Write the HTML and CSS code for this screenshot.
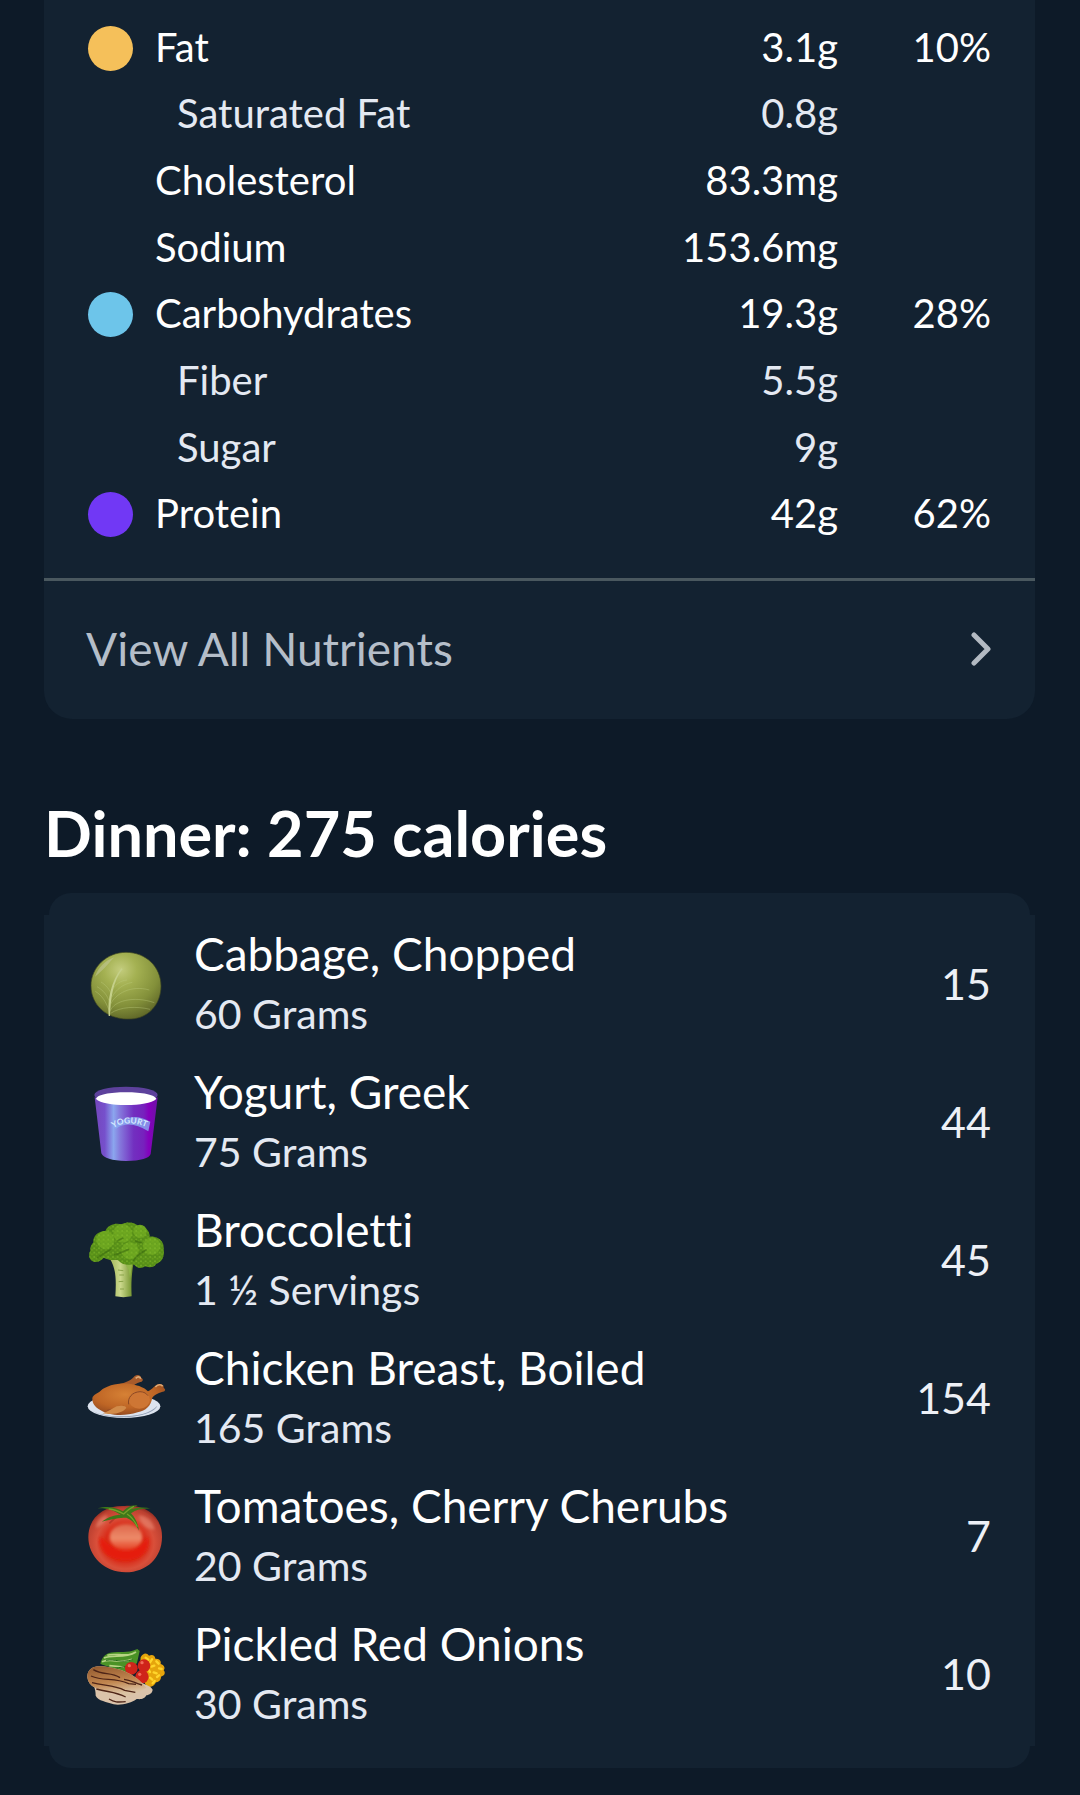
FILE: index.html
```html
<!DOCTYPE html>
<html lang="en">
<head>
<meta charset="utf-8">
<meta name="viewport" content="width=device-width, initial-scale=1">
<title>Dinner</title>
<link rel="stylesheet" href="styles.css">
</head>
<body>
<main class="page">
  <section class="nutrients">
    <table class="nutrient-table">
      <tbody>
        <tr><td class="dot-cell"><span class="dot dot-fat"></span></td><th scope="row">Fat</th><td class="amount">3.1g</td><td class="percent">10%</td></tr>
        <tr class="sub"><td></td><th scope="row">Saturated Fat</th><td class="amount">0.8g</td><td></td></tr>
        <tr><td></td><th scope="row">Cholesterol</th><td class="amount">83.3mg</td><td></td></tr>
        <tr><td></td><th scope="row">Sodium</th><td class="amount">153.6mg</td><td></td></tr>
        <tr><td class="dot-cell"><span class="dot dot-carbs"></span></td><th scope="row">Carbohydrates</th><td class="amount">19.3g</td><td class="percent">28%</td></tr>
        <tr class="sub"><td></td><th scope="row">Fiber</th><td class="amount">5.5g</td><td></td></tr>
        <tr class="sub"><td></td><th scope="row">Sugar</th><td class="amount">9g</td><td></td></tr>
        <tr><td class="dot-cell"><span class="dot dot-protein"></span></td><th scope="row">Protein</th><td class="amount">42g</td><td class="percent">62%</td></tr>
      </tbody>
    </table>
    <a class="view-all" href="#nutrients">
      <span>View All Nutrients</span>
      <svg class="chevron" viewBox="0 0 22 36" aria-hidden="true"><path d="M3 4 17 18 3 32"/></svg>
    </a>
  </section>

  <h1 class="meal-title">Dinner: 275 calories</h1>

  <section class="meal">
    <ul class="foods">
      <li class="food">
        <svg class="food-icon" viewBox="54 48 228 228" aria-hidden="true">
          <defs>
            <radialGradient id="cabbage" cx=".42" cy=".26" r=".78"><stop offset="0" stop-color="#c3cc7d"/><stop offset=".3" stop-color="#a4b152"/><stop offset=".7" stop-color="#83903a"/><stop offset="1" stop-color="#5d6527"/></radialGradient>
          </defs>
          <path d="M168 67c60 0 105 44 105 101 0 55-38 97-90 99-70 4-120-40-120-100 0-55 47-100 105-100Z" fill="url(#cabbage)" stroke="#3c4520" stroke-width="2"/>
          <path d="M75 140c12-30 30-48 58-58-18 18-34 40-58 58Z" fill="#c2c99a" opacity=".55"/>
          <path d="M120 258c2-50 8-105 38-141l-4-2c-30 38-42 92-38 143Z" fill="#c5d08a"/>
          <g fill="none" stroke="#bcc97c" stroke-width="2" opacity=".6"><path d="M121 242c10-28 68-46 132-24M122 250c28-20 78-22 118-12M122 222c14-30 60-58 116-42M125 202c14-24 34-40 62-45M129 176c10-14 22-24 42-26M116 238c-8-22-20-42-40-54M119 218c-6-22-20-38-38-48M123 190c-8-18-18-26-30-34"/></g>
        </svg>
        <div class="food-text"><span class="food-name">Cabbage, Chopped</span><span class="serving">60 Grams</span></div>
        <span class="calories">15</span>
      </li>
      <li class="food">
        <svg class="food-icon" viewBox="54 42 228 228" aria-hidden="true">
          <defs>
            <linearGradient id="cup"><stop offset="0" stop-color="#7446bd"/><stop offset=".16" stop-color="#7650cc"/><stop offset=".3" stop-color="#8ba6ee"/><stop offset=".4" stop-color="#8579dc"/><stop offset=".62" stop-color="#722fc0"/><stop offset=".78" stop-color="#7621bd"/><stop offset=".86" stop-color="#8500bd"/><stop offset="1" stop-color="#6c12a4"/></linearGradient>
            <path id="yogurt-arc" d="M130 174Q176 146 235 174"/>
          </defs>
          <path d="M74 82Q168 118 263 82L242 252Q235 272 168 273 104 272 94 250Z" fill="url(#cup)"/>
          <ellipse cx="168" cy="75" rx="95" ry="25" fill="#5d419c"/>
          <path d="M78 87c2-13 42-20 90-20s87 7 91 20c-14 12-49 18-91 18s-77-6-90-18Z" fill="#fff"/>
          <path d="M130 171Q180 120 241 155L235 184Q178 148 138 176Z" fill="#8aabf2" opacity=".8"/>
          <text class="cup-label"><textPath href="#yogurt-arc">YOGURT</textPath></text>
        </svg>
        <div class="food-text"><span class="food-name">Yogurt, Greek</span><span class="serving">75 Grams</span></div>
        <span class="calories">44</span>
      </li>
      <li class="food">
        <svg class="food-icon" viewBox="54 54 228 228" aria-hidden="true">
          <defs>
            <linearGradient id="stalk"><stop offset="0" stop-color="#a4b85b"/><stop offset=".45" stop-color="#cbd88c"/><stop offset="1" stop-color="#6b8d25"/></linearGradient>
            <pattern id="florets" width="14" height="13" patternUnits="userSpaceOnUse"><circle cx="3" cy="3" r="3" fill="#85bd2c"/><circle cx="10" cy="8" r="3" fill="#76ab20"/><circle cx="8" cy="1" r="1" fill="#3d7410"/><circle cx="3" cy="10" r="1" fill="#447c12"/></pattern>
            <path id="crown" d="M76 174c-20-3-22-22-15-34-1-14 6-20 9-25-1-20 14-33 36-34 8-18 30-25 48-20 20-10 40-6 50 4 20 0 36 14 35 33 26-2 44 14 42 36 4 24-6 40-22 45-5 12-24 12-34 8-12 8-22 6-32-4-10-4-18 2-28-2-15-3-18-14-26-14-18 4-28-2-38-6-6 8-14 12-25 13Z"/>
          </defs>
          <path d="M120 165c18 28 19 62 16 112q24 5 49 0c-2-38 0-66 5-96l-32-12Z" fill="url(#stalk)"/>
          <path d="M168 185l20-14-8 52-4-26Z" fill="#91b64a"/>
          <path d="M144 198l16 2M148 213h14M146 233l14-1M150 255h12" stroke="#8ba44a" stroke-width="3"/>
          <use href="#crown" fill="#578f18"/>
          <g fill="#6ba51f"><circle cx="158" cy="88" r="28"/><circle cx="106" cy="108" r="27"/><circle cx="245" cy="126" r="26"/><circle cx="180" cy="140" r="26"/><circle cx="210" cy="82" r="20"/></g>
          <use href="#crown" fill="url(#florets)" opacity=".6"/>
          <path d="M82 162c16-12 26-18 42-26M132 152c22-2 30-14 46-16M190 171c10-20 24-24 40-34M195 110l20 7M142 110l18-8" fill="none" stroke="#315f0b" stroke-width="5" opacity=".5"/>
        </svg>
        <div class="food-text"><span class="food-name">Broccoletti</span><span class="serving">1 ½ Servings</span></div>
        <span class="calories">45</span>
      </li>
      <li class="food">
        <svg class="food-icon" viewBox="54 48 228 228" aria-hidden="true">
          <defs>
            <radialGradient id="roast" cx=".45" cy=".35" r=".7"><stop offset="0" stop-color="#d68135"/><stop offset=".6" stop-color="#be6525"/><stop offset="1" stop-color="#8d461e"/></radialGradient>
          </defs>
          <ellipse cx="162" cy="187" rx="109" ry="35" fill="#dce3ee"/>
          <path d="M63 197c30 26 164 31 199-12-20 42-160 45-199 12Z" fill="#8d9bb0"/>
          <path d="M144 121c28-5 42-15 50-25 10-7 19-1 20 6 8 4 4 12-3 12-12 4-20 9-27 17Z" fill="#a85b2b"/>
          <path d="M67 162c3-12 17-13 25-22 20-20 72-27 101-18 22 5 34 12 41 20 13-5 21-20 32-22 10-1 17 5 15 12 8 4 4 12-3 11-16 4-27 11-31 18-5 26-19 38-44 44-42 14-89 9-111-6-18-10-26-22-25-37Z" fill="url(#roast)"/>
          <ellipse cx="208" cy="167" rx="32" ry="27" fill="#ce7634"/>
          <path d="M176 181c-4-19 10-37 34-38 12 0 20 6 24 12M112 199c18-2 26-10 49-12" fill="none" stroke="#8b4823" stroke-width="3"/>
          <path d="M98 208c15-4 26-14 42-21 15-3 28-2 29 5-9 11-29 22-71 16Z" fill="#d18b49"/>
          <path d="M197 103c6-6 13-6 15 1M256 129c8-9 18-8 22-2" fill="none" stroke="#dfaa75" stroke-width="5"/>
        </svg>
        <div class="food-text"><span class="food-name">Chicken Breast, Boiled</span><span class="serving">165 Grams</span></div>
        <span class="calories">154</span>
      </li>
      <li class="food">
        <svg class="food-icon" viewBox="54 60 228 228" aria-hidden="true">
          <defs>
            <radialGradient id="tomato" cx=".5" cy=".56" r=".6"><stop offset="0" stop-color="#e32810"/><stop offset=".45" stop-color="#d92b18"/><stop offset=".65" stop-color="#d94f3a"/><stop offset=".88" stop-color="#bb4030"/><stop offset="1" stop-color="#79231b"/></radialGradient>
            <linearGradient id="shine" x2="0" y2="1"><stop offset="0" stop-color="#dd6549"/><stop offset=".55" stop-color="#ed8a69"/><stop offset="1" stop-color="#e53c20"/></linearGradient>
            <filter id="soft"><feGaussianBlur stdDeviation="4"/></filter>
          </defs>
          <path d="M165 84c65-5 112 33 111 93 0 62-46 106-109 106S55 235 55 178c0-61 48-97 110-94Z" fill="url(#tomato)"/>
          <path d="M90 178c20 8 26 36 78 38 48-2 50-26 66-38 8 39-19 69-67 69-47 0-83-25-77-69Z" fill="#e51d08" filter="url(#soft)"/>
          <ellipse cx="168" cy="177" rx="49" ry="39" fill="url(#shine)" filter="url(#soft)"/>
          <path d="M205 112c28 2 44 18 49 43-20 0-42-14-49-43ZM78 150c0-22 14-33 32-40 8 12-10 32-32 40Z" fill="#ec927a" opacity=".55" filter="url(#soft)"/>
          <path d="M148 111c-10 6-20 14-30 25" stroke="#a82c20" stroke-width="5" opacity=".6"/>
          <path d="M83 91c30-8 54-3 76 9 10-10 23-20 44-18-8 4-14 8-20 12 22-6 42-7 60-2-26-1-44 3-60 14 12 12 20 28 24 52-10-20-20-32-38-39-22 0-42 4-74 12 22-15 38-20 57-20-18-13-38-21-69-20Z" fill="#3d7819"/>
          <path d="M116 93c20 2 30 7 45 15 9-9 18-17 31-23M171 108c17 10 24 23 31 38" fill="none" stroke="#75a02a" stroke-width="4"/>
        </svg>
        <div class="food-text"><span class="food-name">Tomatoes, Cherry Cherubs</span><span class="serving">20 Grams</span></div>
        <span class="calories">7</span>
      </li>
      <li class="food">
        <svg class="food-icon" viewBox="54 54 228 228" aria-hidden="true">
          <defs><linearGradient id="grilled" x2=".3" y2="1"><stop offset="0" stop-color="#92582d"/><stop offset=".6" stop-color="#c1864f"/><stop offset="1" stop-color="#dbc3a4"/></linearGradient></defs>
          <path d="M212 118c8-14 18-14 25-5 12-5 18 2 19 9 14-1 18 8 16 16 12 4 14 13 9 19 8 9 0 18-8 19 0 12-9 16-15 17-6 14-18 16-28 12-10-15-24-44-18-87Z" fill="#e6a50c"/>
          <path d="M227 119l8 6M246 124l-6 9M259 130l7 7M244 146l9-3M267 151l8 2M251 163l9 3M267 172l-6 5M240 179l7 6M254 189l-6 7M235 155l5 7" stroke="#ffd52b" stroke-width="7" stroke-linecap="round"/>
          <path d="M91 137c6-22 18-34 42-34 20-4 40 4 69-10l7 6-8 36-30 30-34-10c-16-10-30-10-46-18Z" fill="#4a9226"/>
          <path d="M102 120c28-12 60 4 96-18M96 131c32-12 60 8 90-7M112 112c22-8 52 5 76-5M118 143l44 4" fill="none" stroke="#b7d484" stroke-width="5"/>
          <path d="M108 127c28-6 42 10 80-2M134 151c18-2 24-6 40-5" fill="none" stroke="#226b18" stroke-width="3"/>
          <g fill="#cf241a"><circle cx="184" cy="151" r="19"/><circle cx="222" cy="143" r="19"/><circle cx="216" cy="176" r="20"/></g>
          <g fill="#f16a57"><circle cx="178" cy="143" r="5"/><circle cx="216" cy="134" r="5"/><circle cx="209" cy="169" r="5"/></g>
          <path d="M52 178c-1-20 13-31 30-33 50-1 108 20 131 48 13 8 28 10 35 22-1 12-12 15-19 17-6 13-19 12-29 11-15 12-47 20-69 16-20-8-47-10-54-26 0-12-2-18-4-25-14-7-19-18-21-30Z" fill="#dbc3aa"/>
          <path d="M52 178c-1-20 13-31 30-33 50-1 108 20 131 48l16 16c-18 12-36 22-65 25-28-8-60-10-91-26-14-7-19-18-21-30Z" fill="url(#grilled)"/>
          <path d="M70 155c30 18 52 6 80 24M63 174c40 18 66 2 113 23l22 2M66 194c38 10 65 7 98 23l32 6M79 213c36 10 58 8 88 24M117 243c20 12 30 9 50 8M162 184c22 2 32 12 54 17" fill="none" stroke="#4e2417" stroke-width="4"/>
        </svg>
        <div class="food-text"><span class="food-name">Pickled Red Onions</span><span class="serving">30 Grams</span></div>
        <span class="calories">10</span>
      </li>
    </ul>
  </section>
</main>
</body>
</html>
```
FILE: styles.css
```css
* {
  box-sizing: border-box;
}

body {
  margin: 0;
  background: #0d1a28;
  color: #fff;
  font-family: Lato, "Liberation Sans", sans-serif;
  font-variant-ligatures: none;
}

.page {
  padding: 0 45px 27px 44px;
}

.nutrients {
  background: #132231;
  border-radius: 0 0 28px 28px;
  padding-top: 15px;
}

/* Nutrient rows */
.nutrient-table {
  width: 100%;
  height: 533px;
  border-collapse: collapse;
  font-size: 40px;
  line-height: 48px;
  margin-bottom: 30px;
}

.nutrient-table th,
.nutrient-table td {
  padding: 0 0 3px;
  font-weight: 400;
  text-align: left;
}

.nutrient-table td:first-child {
  width: 111px;
  padding: 0 0 0 44px;
}

.nutrient-table .sub th {
  padding-left: 22px;
}

.nutrient-table .sub {
  color: #e4e9f2;
}

.nutrient-table .amount {
  text-align: right;
}

.nutrient-table td:last-child {
  width: 197px;
  padding-right: 44px;
  text-align: right;
}

.dot {
  display: block;
  width: 45px;
  height: 45px;
  border-radius: 50%;
}

.dot-fat {
  background: #f5c05a;
}

.dot-carbs {
  background: #6dc5ea;
}

.dot-protein {
  background: #7138f5;
}

.view-all {
  display: flex;
  align-items: center;
  justify-content: space-between;
  padding: 42px 42px 44px;
  border-top: 3px solid #4a585f;
  color: #b5bec9;
  font-size: 46px;
  line-height: 52px;
  text-decoration: none;
}

.chevron {
  width: 22px;
  height: 36px;
  fill: none;
  stroke: #b3bac2;
  stroke-width: 5;
  stroke-linecap: round;
  stroke-linejoin: round;
}

/* Meal */
.meal-title {
  margin: 78px 0 24px;
  font-size: 63px;
  font-weight: 700;
  line-height: 72px;
}

/* The rounded end strips are slightly narrower than the body. */
.meal::before,
.meal::after {
  content: "";
  display: block;
  height: 22px;
  margin: 0 5px;
  background: #132231;
}

.meal::before {
  border-radius: 22px 22px 0 0;
}

.meal::after {
  border-radius: 0 0 22px 22px;
}

.foods {
  margin: 0;
  padding: 0 44px 3px;
  list-style: none;
  background: #132231;
}

.food {
  display: flex;
  align-items: center;
  height: 138px;
}

.food-icon {
  flex: none;
  width: 76px;
  height: 76px;
  margin-right: 30px;
  overflow: visible;
}

.cup-label {
  fill: #d5eaff;
  font-size: 25px;
  font-weight: 700;
}

.food-text {
  flex: 1;
  display: flex;
  flex-direction: column;
}

.food-name {
  font-size: 46px;
  line-height: 60px;
}

.serving {
  color: #e4e9f2;
  font-size: 41px;
  line-height: 60px;
}

.calories {
  color: #edf0f6;
  font-size: 43px;
  line-height: 60px;
}
```
